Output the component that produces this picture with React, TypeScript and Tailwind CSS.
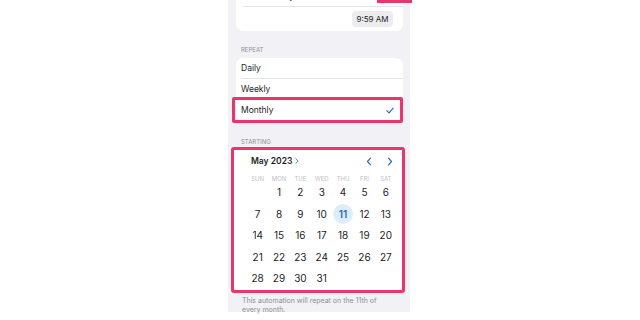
const PINK = "border-[#e8356b]";

const weekdays = ["SUN", "MON", "TUE", "WED", "THU", "FRI", "SAT"];

// May 2023 starts on a Monday
const days: (number | null)[] = [null, ...Array.from({ length: 31 }, (_, i) => i + 1)];

function Chevron({ dir, className }: { dir: "left" | "right"; className?: string }) {
  return (
    <svg viewBox="0 0 8 12" className={className} fill="none">
      <path
        d={dir === "left" ? "M6 1.5L2 6l4 4.5" : "M2 1.5L6 6l-4 4.5"}
        stroke="currentColor"
        strokeWidth="1.6"
        strokeLinecap="round"
        strokeLinejoin="round"
      />
    </svg>
  );
}

function RepeatRow({ label, last, checked }: { label: string; last?: boolean; checked?: boolean }) {
  return (
    <div className="relative h-[21px] pl-[5px]">
      <div
        className={`flex h-full items-center justify-between pr-[9px] ${last ? "" : "border-b border-[#e4e4e8]"}`}
      >
        <span className="text-[8.5px] text-[#1c1c1e]">{label}</span>
        {checked && (
          <svg viewBox="0 0 10 8" className="h-[7px] w-[8px] text-[#1f6fc4]" fill="none">
            <path d="M1 4.2l2.8 2.8L9 1" stroke="currentColor" strokeWidth="1.4" strokeLinecap="round" strokeLinejoin="round" />
          </svg>
        )}
      </div>
      {checked && (
        <div className={`absolute -left-[4px] right-0 -top-[3px] -bottom-[2px] rounded-[2px] border-[3px] ${PINK}`} />
      )}
    </div>
  );
}

function Calendar() {
  return (
    <div className={`-ml-[5px] -mr-[2px] h-[146px] rounded-[3px] border-[3px] ${PINK} bg-white pt-[4px]`}>
      <div className="flex h-[14px] items-center justify-between pl-[17px] pr-[9px]">
        <div className="flex items-center gap-[3px]">
          <span className="text-[8.5px] font-semibold text-[#1c1c1e]">May 2023</span>
          <Chevron dir="right" className="h-[6px] w-[4px] text-[#1f6fc4]" />
        </div>
        <div className="flex items-center gap-[15px] text-[#1f6fc4]">
          <Chevron dir="left" className="h-[9px] w-[6px]" />
          <Chevron dir="right" className="h-[9px] w-[6px]" />
        </div>
      </div>
      <div className="mt-[6px] ml-[13px] w-[149.5px]">
        <div className="grid h-[8px] grid-cols-7 items-center">
          {weekdays.map((d) => (
            <span key={d} className="text-center text-[6px] text-[#c2c2c7]">
              {d}
            </span>
          ))}
        </div>
        <div className="grid grid-cols-7 auto-rows-[21.5px]">
          {days.map((d, i) => (
            <div key={i} className="flex items-center justify-center">
              {d !== null &&
                (d === 11 ? (
                  <span className="flex h-[20px] w-[20px] items-center justify-center rounded-full bg-[#deedfb] text-[10px] font-semibold text-[#1f6fc4]">
                    {d}
                  </span>
                ) : (
                  <span className="text-[10px] text-[#1c1c1e]">{d}</span>
                ))}
            </div>
          ))}
        </div>
      </div>
    </div>
  );
}

export default function App() {
  return (
    <div className="h-[320px] w-[640px] bg-white font-['Inter',sans-serif]">
      <div className="ml-[228px] flex h-[312px] w-[182px] flex-col bg-[#f1f1f6] pl-[8px] pr-[7px]">
        {/* Time card (scrolled off the top) */}
        <div className="-mt-[15px] rounded-[7px] bg-white">
          <div className="relative h-[22px] pl-[7px]">
            <div className="flex h-full items-center border-b border-[#e4e4e8]">
              <span className="text-[9px] text-[#1c1c1e]">Time of Day</span>
            </div>
            <div className={`absolute -right-[9px] bottom-[4px] h-[20px] w-[35px] border-[3px] ${PINK}`} />
          </div>
          <div className="flex h-[24px] items-center justify-end pr-[10px]">
            <span className="flex h-[16px] w-[41px] items-center justify-center rounded-[4px] bg-[#ececef] text-[8px] text-[#1c1c1e]">
              9:59 AM
            </span>
          </div>
        </div>

        {/* Repeat */}
        <div className="pt-[15px] pb-[4px] pl-[5px] text-[6px] leading-[8px] text-[#8e8e93]">REPEAT</div>
        <div className="rounded-[7px] bg-white">
          <RepeatRow label="Daily" />
          <RepeatRow label="Weekly" />
          <RepeatRow label="Monthly" last checked />
        </div>

        {/* Starting */}
        <div className="pt-[17px] pb-[1px] pl-[5px] text-[6px] leading-[8px] text-[#8e8e93]">STARTING</div>
        <Calendar />

        <p className="mt-[3px] pl-[6px] text-[7px] leading-[9px] text-[#8e8e93]">
          This automation will repeat on the 11th of
          <br />
          every month.
        </p>
      </div>
    </div>
  );
}
